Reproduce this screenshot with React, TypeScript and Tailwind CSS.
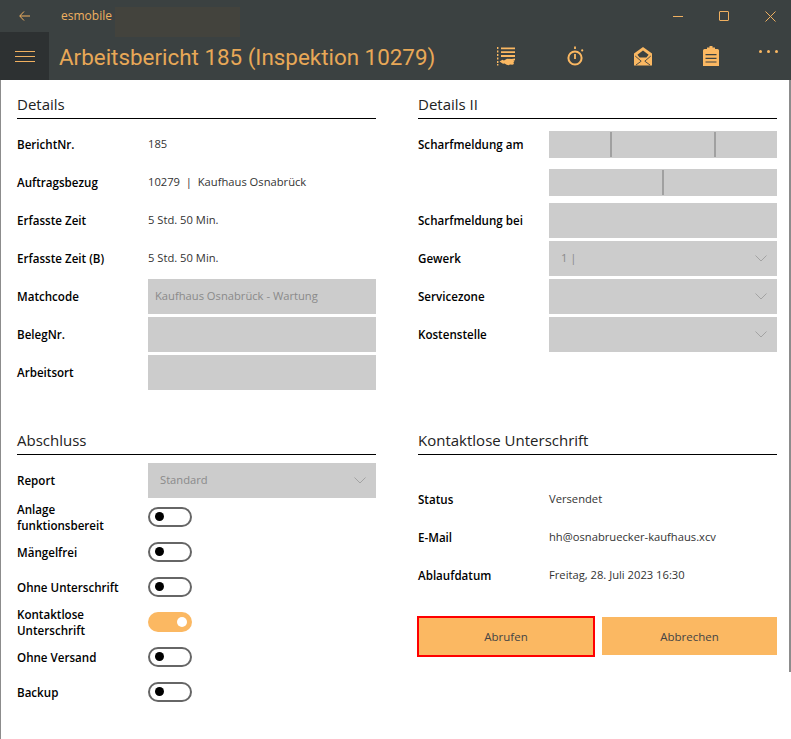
const font = { fontFamily: '"Open Sans", "Noto Sans", sans-serif' };

function Section({ title, className = "" }: { title: string; className?: string }) {
  return (
    <div className={`h-[39px] border-b border-black flex items-center pt-[10px] text-[15px] text-[#222] ${className}`}>
      {title}
    </div>
  );
}

function Row({ label, children, h = "h-[38px]", labelPad = "pt-px" }: { label: React.ReactNode; children?: React.ReactNode; h?: string; labelPad?: string }) {
  return (
    <div className={`${h} flex items-center`}>
      <div className={`w-[131px] shrink-0 ${labelPad} text-[11.6px] leading-[16px] font-semibold text-black`}>{label}</div>
      <div className="flex-1 text-[11.2px] text-[#333]">{children}</div>
    </div>
  );
}

function Value({ children }: { children: React.ReactNode }) {
  return <div className="pt-px">{children}</div>;
}

function Chevron() {
  return (
    <svg width="12" height="7" viewBox="0 0 12 7" fill="none" stroke="#a3a3a3" strokeWidth="1">
      <path d="M.5.5l5.5 5.5 5.5-5.5" />
    </svg>
  );
}

function Field({ text, select, h = "h-[35px]" }: { text?: string; select?: boolean; h?: string }) {
  return (
    <div className={`${h} bg-[#cccccc] flex items-center justify-between ${select ? "pl-[12px]" : "pl-[7px]"} pr-[10px] text-[#8a8a8a]`}>
      <span>{text}</span>
      {select && <Chevron />}
    </div>
  );
}

function Toggle({ on }: { on?: boolean }) {
  if (on) {
    return (
      <div className="w-[44px] h-[20px] rounded-full bg-[#fbb862] flex items-center justify-end pr-[5px]">
        <div className="w-[10px] h-[10px] rounded-full bg-white" />
      </div>
    );
  }
  return (
    <div className="w-[44px] h-[20px] rounded-full border-2 border-[#666] flex items-center pl-[5px]">
      <div className="w-[9px] h-[9px] rounded-full bg-black" />
    </div>
  );
}

function ToggleRow({ label, on }: { label: React.ReactNode; on?: boolean }) {
  return (
    <Row label={label} h="h-[35px]" labelPad="pt-[3px]">
      <Toggle on={on} />
    </Row>
  );
}

const ICON = "#fbb862";
const BAR = "#3b4141";

function ListIcon() {
  return (
    <svg width="20" height="20" viewBox="0 0 20 20" fill={ICON}>
      <path d="M0 1h1.4v2H0zM0 4.5h1.4v2H0zM0 8h1.4v2H0zM0 11.5h1.4v2H0zM0 15h1.4v2H0zM0 18h1.4v1.6H0z" />
      <path d="M4 1.5h14v1.8H4zM4 5.3h14v1.8H4zM4 9.1h14v1.8H4z" />
      <path d="M2.5 15.5l3-1.8 1.5.7 3-1.6 4.5.2 3.5-.4v1.6l-1.6.6 1 1-1 .8.6 1.4-1.6.8-2.4-.4-1.4.8-2-.4-2-1.3-1.6.2z" />
    </svg>
  );
}

function WatchIcon() {
  return (
    <svg width="18" height="20" viewBox="0 0 18 20" fill="none" stroke={ICON}>
      <circle cx="8" cy="12" r="6.6" strokeWidth="2" />
      <path d="M8 .5v2.5M8 8v5" strokeWidth="1.8" />
      <circle cx="15.2" cy="4.4" r="1.1" fill={ICON} stroke="none" />
    </svg>
  );
}

function MailIcon() {
  return (
    <svg width="18" height="19" viewBox="0 0 18 19" fill={ICON}>
      <path fillRule="evenodd" d="M9 0l9 6.6V18.6H0V6.6zM9 3.6L3.4 7.8 5.6 10.6h6.8l2.2-2.8z" />
      <path d="M1.2 9l6 5.2L2 18M16.8 9l-6 5.2 5.2 3.8" fill="none" stroke={BAR} strokeWidth=".9" />
    </svg>
  );
}

function ClipboardIcon() {
  return (
    <svg width="16" height="20" viewBox="0 0 16 20" fill={ICON}>
      <path fillRule="evenodd" d="M6.5 0h3v1.5H12V3h2.5A1.5 1.5 0 0 1 16 4.5V20H0V4.5A1.5 1.5 0 0 1 1.5 3H4V1.5h2.5zM2.5 8v1.2h11V8zM2.5 11.7v1.2h11v-1.2zM2.5 15.4v1.2h11v-1.2z" />
    </svg>
  );
}

export default function App() {
  return (
    <div className="w-[791px] h-[739px] bg-white relative overflow-hidden" style={font}>
      <div className="bg-[#3b4141] h-[80px]">
        <div className="h-[32px] flex items-center text-[#f0b060]">
          <div className="w-[49px] flex justify-center">
            <svg width="11" height="10" viewBox="0 0 11 10" fill="none" stroke="#f0b060" strokeWidth="1">
              <path d="M11 5H1M5 .5L.7 5 5 9.5" />
            </svg>
          </div>
          <span className="ml-[12px] text-[12px]">esmobile</span>
          <div className="ml-[3px] w-[125px] h-[30px] mt-[12px] bg-[#43433d]" />
          <div className="ml-auto mr-[-2px] flex items-center">
            <div className="w-[46px] flex justify-center">
              <div className="w-[10px] h-px bg-[#f0b060]" />
            </div>
            <div className="w-[46px] flex justify-center">
              <div className="w-[10px] h-[10px] rounded-[1px] border border-[#f0b060]" />
            </div>
            <div className="w-[46px] flex justify-center">
              <svg width="11" height="11" viewBox="0 0 11 11" stroke="#f0b060" strokeWidth="1">
                <path d="M.5.5l10 10M10.5.5l-10 10" />
              </svg>
            </div>
          </div>
        </div>
        <div className="h-[48px] flex items-center">
          <div className="w-[49px] h-full bg-[#2d3132] flex flex-col items-center justify-center gap-[4px]">
            <div className="w-[20px] h-px bg-[#f0b060]" />
            <div className="w-[20px] h-px bg-[#f0b060]" />
            <div className="w-[20px] h-px bg-[#f0b060]" />
          </div>
          <h1 className="ml-[10px] pt-[3px] text-[22.4px] leading-none text-[#e8a857] whitespace-nowrap" style={{ fontFamily: "Roboto, sans-serif" }}>
            Arbeitsbericht 185 (Inspektion 10279)
          </h1>
          <div className="ml-auto flex items-center h-full">
            <div className="w-[68px] flex justify-center"><ListIcon /></div>
            <div className="w-[68px] pl-[2px] flex justify-center"><WatchIcon /></div>
            <div className="w-[68px] flex justify-center"><MailIcon /></div>
            <div className="w-[68px] flex justify-center"><ClipboardIcon /></div>
            <div className="w-[46px] flex justify-center gap-[5px] pb-[10px]">
              <i className="w-[3px] h-[3px] rounded-full bg-[#fbb862]" />
              <i className="w-[3px] h-[3px] rounded-full bg-[#fbb862]" />
              <i className="w-[3px] h-[3px] rounded-full bg-[#fbb862]" />
            </div>
          </div>
        </div>
      </div>

      <div className="grid grid-cols-[359px_359px] gap-x-[42px] pl-[17px]">
        <div>
          <Section title="Details" />
          <div className="mt-[6px]">
            <Row label="BerichtNr."><Value>185</Value></Row>
            <Row label="Auftragsbezug"><Value>10279 &nbsp;|&nbsp; Kaufhaus Osnabrück</Value></Row>
            <Row label="Erfasste Zeit"><Value>5 Std. 50 Min.</Value></Row>
            <Row label="Erfasste Zeit (B)"><Value>5 Std. 50 Min.</Value></Row>
            <Row label="Matchcode"><Field text="Kaufhaus Osnabrück - Wartung" /></Row>
            <Row label="BelegNr."><Field /></Row>
            <Row label="Arbeitsort"><Field /></Row>
          </div>
          <Section title="Abschluss" className="mt-[25px]" />
          <div className="mt-[6px]">
            <Row label="Report"><Field text="Standard" select /></Row>
            <ToggleRow label={<>Anlage<br />funktionsbereit</>} />
            <ToggleRow label="Mängelfrei" />
            <ToggleRow label="Ohne Unterschrift" />
            <ToggleRow label={<>Kontaktlose<br />Unterschrift</>} on />
            <ToggleRow label="Ohne Versand" />
            <ToggleRow label="Backup" />
          </div>
        </div>

        <div>
          <Section title="Details II" />
          <div className="mt-[6px]">
            <Row label="Scharfmeldung am">
              <div className="h-[27px] bg-[#cccccc] grid grid-cols-[61px_2px_102px_2px_61px]">
                <div />
                <div className="my-px bg-[#a0a0a0]" />
                <div />
                <div className="my-px bg-[#a0a0a0]" />
                <div />
              </div>
            </Row>
            <Row label="">
              <div className="h-[27px] bg-[#cccccc] flex justify-center">
                <div className="w-[2px] my-px bg-[#a0a0a0]" />
              </div>
            </Row>
            <Row label="Scharfmeldung bei"><Field /></Row>
            <Row label="Gewerk"><Field text="1 |" select /></Row>
            <Row label="Servicezone"><Field select /></Row>
            <Row label="Kostenstelle"><Field select /></Row>
          </div>
          <Section title="Kontaktlose Unterschrift" className="mt-[63px]" />
          <div className="mt-[25px]">
            <Row label="Status"><Value>Versendet</Value></Row>
            <Row label="E-Mail"><Value>hh@osnabruecker-kaufhaus.xcv</Value></Row>
            <Row label="Ablaufdatum"><Value>Freitag, 28. Juli 2023 16:30</Value></Row>
          </div>
          <div className="mt-[23px] flex gap-[7px] text-[11.5px] text-[#444] items-start">
            <button className="w-[178px] h-[41px] bg-[#fbb862] border-2 border-[#ff0000] -ml-px -mt-px">Abrufen</button>
            <button className="w-[175px] h-[38px] pt-px bg-[#fbb862]">Abbrechen</button>
          </div>
        </div>
      </div>

      <div className="absolute left-0 top-[80px] bottom-0 w-px bg-[#8c8c8c]" />
      <div className="absolute right-0 top-[80px] h-[592px] w-[2px] bg-[#8c8c8c]" />
    </div>
  );
}
